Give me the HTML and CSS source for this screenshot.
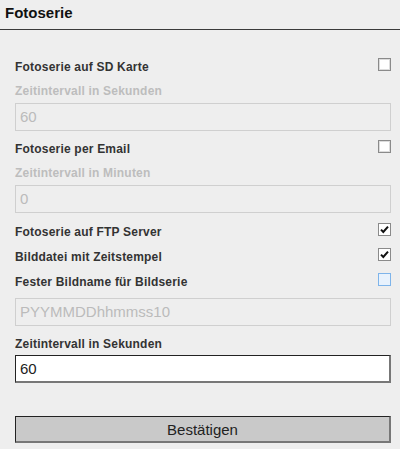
FILE: index.html
```html
<!DOCTYPE html>
<html lang="de">
<head>
<meta charset="utf-8">
<title>Fotoserie</title>
<link rel="stylesheet" href="styles.css">
</head>
<body>
<header class="header">Fotoserie</header>
<main class="form">
  <div class="check-row row-first">
    <span class="label">Fotoserie auf SD Karte</span>
    <span class="box"></span>
  </div>
  <div class="field-label disabled">Zeitintervall in Sekunden</div>
  <div class="input input-disabled">60</div>

  <div class="check-row row-after-input">
    <span class="label">Fotoserie per Email</span>
    <span class="box"></span>
  </div>
  <div class="field-label disabled">Zeitintervall in Minuten</div>
  <div class="input input-disabled">0</div>

  <div class="check-row row-after-input2">
    <span class="label">Fotoserie auf FTP Server</span>
    <span class="box checked"><svg viewBox="0 0 11 11" width="11" height="11"><path d="M2 5.6 L4.3 8 L9 2.6" fill="none" stroke="#111" stroke-width="2"/></svg></span>
  </div>
  <div class="check-row">
    <span class="label">Bilddatei mit Zeitstempel</span>
    <span class="box checked"><svg viewBox="0 0 11 11" width="11" height="11"><path d="M2 5.6 L4.3 8 L9 2.6" fill="none" stroke="#111" stroke-width="2"/></svg></span>
  </div>
  <div class="check-row">
    <span class="label">Fester Bildname für Bildserie</span>
    <span class="box hover"></span>
  </div>
  <div class="input input-disabled input-gap">PYYMMDDhhmmss10</div>

  <div class="field-label active">Zeitintervall in Sekunden</div>
  <div class="input input-active">60</div>

  <button class="submit" type="button">Bestätigen</button>
</main>
</body>
</html>
```
FILE: styles.css
```css
html, body {
  margin: 0;
  padding: 0;
  background: #eeeeee;
  font-family: "Liberation Sans", Arial, sans-serif;
  color: #333;
}
.header {
  box-sizing: border-box;
  height: 30px;
  padding: 4px 0 0 5px;
  font-size: 15px;
  font-weight: bold;
  line-height: 17px;
  color: #111;
  border-bottom: 1px solid #3a3a3a;
}
.form {
  display: flex;
  flex-direction: column;
  padding: 0 9px 0 15px;
}
.check-row {
  display: flex;
  align-items: center;
  justify-content: space-between;
  height: 25px;
}
.row-first { margin-top: 24px; }
.row-after-input { margin-top: 5px; }
.row-after-input2 { margin-top: 6px; }
.label {
  font-size: 12px;
  font-weight: bold;
  color: #333;
  letter-spacing: 0.2px;
}
.box {
  box-sizing: border-box;
  width: 13px;
  height: 13px;
  margin-bottom: 4px;
  background: #fff;
  border: 1px solid #8a8a8a;
  box-shadow: inset 0 0 0 1px #dcdcdc;
  display: flex;
  align-items: center;
  justify-content: center;
}
.box.checked { box-shadow: none; }
.box.hover {
  background: #e8f2fd;
  border-color: #7eb4ea;
  box-shadow: none;
}
.field-label {
  margin-top: 4px;
  height: 16px;
  line-height: 16px;
  font-size: 12px;
  font-weight: bold;
  letter-spacing: 0.2px;
}
.field-label.disabled { color: #bdbdbd; }
.field-label.active { margin-top: 10px; color: #333; }
.input {
  box-sizing: border-box;
  height: 28px;
  margin-top: 4px;
  padding: 0 4px;
  font-size: 15px;
  line-height: 26px;
}
.input-disabled {
  border: 1px solid #cfcfcf;
  color: #bbbbbb;
}
.input-gap { margin-top: 4px; }
.input-active {
  margin-top: 3px;
  background: #fff;
  color: #222;
  border-top: 1px solid #222;
  border-left: 1px solid #222;
  border-right: 2px solid #777;
  border-bottom: 2px solid #777;
}
.submit {
  box-sizing: border-box;
  height: 27px;
  margin-top: 33px;
  background: #c9c9c9;
  font-family: "Liberation Sans", Arial, sans-serif;
  font-size: 15px;
  color: #222;
  border-top: 1px solid #222;
  border-left: 1px solid #222;
  border-right: 2px solid #777;
  border-bottom: 2px solid #777;
  padding: 0;
}
```
